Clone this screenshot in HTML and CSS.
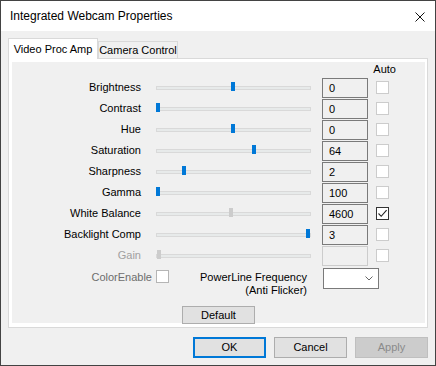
FILE: index.html
```html
<!DOCTYPE html>
<html lang="en">
<head>
    <meta charset="UTF-8">
    <title>Integrated Webcam Properties</title>
    <link rel="stylesheet" href="styles.css">
</head>
<body>
<div class="window">
    <div class="titlebar">
        <span class="title">Integrated Webcam Properties</span>
        <svg class="close" width="10" height="10" viewBox="0 0 10 10">
            <path d="M0.5 0.5 L9.5 9.5 M9.5 0.5 L0.5 9.5" stroke="#111" stroke-width="1" fill="none"/>
        </svg>
    </div>

    <div class="content">
        <div class="tabs">
            <div class="tab active">Video Proc Amp</div>
            <div class="tab">Camera Control</div>
        </div>

        <div class="page">
            <div class="page-inner">
                <div class="auto-head">Auto</div>

                <div class="props">
                    <div class="label">Brightness</div>
                    <div class="slider"><div class="track"></div><div class="thumb" style="left:75px"></div></div>
                    <div class="edit">0</div>
                    <div class="check"></div>

                    <div class="label">Contrast</div>
                    <div class="slider"><div class="track"></div><div class="thumb" style="left:0px"></div></div>
                    <div class="edit">0</div>
                    <div class="check"></div>

                    <div class="label">Hue</div>
                    <div class="slider"><div class="track"></div><div class="thumb" style="left:75px"></div></div>
                    <div class="edit">0</div>
                    <div class="check"></div>

                    <div class="label">Saturation</div>
                    <div class="slider"><div class="track"></div><div class="thumb" style="left:96px"></div></div>
                    <div class="edit">64</div>
                    <div class="check"></div>

                    <div class="label">Sharpness</div>
                    <div class="slider"><div class="track"></div><div class="thumb" style="left:26px"></div></div>
                    <div class="edit">2</div>
                    <div class="check"></div>

                    <div class="label">Gamma</div>
                    <div class="slider"><div class="track"></div><div class="thumb" style="left:0px"></div></div>
                    <div class="edit">100</div>
                    <div class="check"></div>

                    <div class="label">White Balance</div>
                    <div class="slider"><div class="track"></div><div class="thumb off" style="left:73px"></div></div>
                    <div class="edit">4600</div>
                    <div class="check checked">
                        <svg width="11" height="11" viewBox="0 0 11 11">
                            <path d="M1.5 5.5 L4.2 8.3 L9.6 2.2" stroke="#222" stroke-width="1.1" fill="none"/>
                        </svg>
                    </div>

                    <div class="label">Backlight Comp</div>
                    <div class="slider"><div class="track"></div><div class="thumb" style="left:150px"></div></div>
                    <div class="edit">3</div>
                    <div class="check"></div>

                    <div class="label disabled">Gain</div>
                    <div class="slider"><div class="track"></div><div class="thumb off" style="left:1px"></div></div>
                    <div class="edit off"></div>
                    <div class="check"></div>
                </div>

                <div class="extra">
                    <div class="label color-label">ColorEnable</div>
                    <div class="extra-mid">
                        <div class="check color-check"></div>
                        <div class="powerline">PowerLine Frequency<br>(Anti Flicker)</div>
                    </div>
                    <div class="combo">
                        <svg width="8" height="5" viewBox="0 0 8 5">
                            <path d="M0.5 0.5 L4 4 L7.5 0.5" stroke="#666" stroke-width="1" fill="none"/>
                        </svg>
                    </div>
                </div>

                <div class="default-row">
                    <div class="btn">Default</div>
                </div>
            </div>
        </div>

        <div class="buttons">
            <div class="btn btn-main">OK</div>
            <div class="btn btn-wide">Cancel</div>
            <div class="btn btn-wide off">Apply</div>
        </div>
    </div>
</div>
</body>
</html>
```

FILE: styles.css
```css
body {
    margin: 0;
    font-family: "Liberation Sans", Arial, sans-serif;
    font-size: 11px;
    color: #000;
    background-color: #f0f0f0;
}
.window {
    width: 436px;
    height: 366px;
    box-sizing: border-box;
    border: 1px solid #434343;
    background-color: #f0f0f0;
    display: flex;
    flex-direction: column;
}
.titlebar {
    height: 30px;
    background-color: #fff;
    display: flex;
    align-items: center;
    justify-content: space-between;
    padding: 0 10px 0 9px;
}
.title {
    font-size: 12px;
}
.close {
    display: block;
    margin-top: 1px;
}
.content {
    flex-grow: 1;
    padding: 7px 7px 0 7px;
}
.tabs {
    display: flex;
    align-items: flex-end;
    height: 20px;
}
.tab {
    box-sizing: border-box;
    height: 17px;
    width: 80px;
    border: 1px solid #d9d9d9;
    border-bottom: none;
    background-color: #f0f0f0;
    text-align: center;
    line-height: 16px;
}
.tab.active {
    width: 90px;
    height: 21px;
    margin-bottom: -1px;
    background-color: #fff;
    line-height: 20px;
    position: relative;
    z-index: 1;
}
.page {
    box-sizing: border-box;
    height: 270px;
    border: 1px solid #d9d9d9;
    background-color: #fff;
    padding: 3px 2px 4px 3px;
}
.page-inner {
    height: 100%;
    background-color: #f0f0f0;
}
.auto-head {
    height: 15px;
    line-height: 15px;
    text-align: right;
    padding-right: 29px;
}
.props {
    display: grid;
    grid-template-columns: 144px 166px 54px 13px;
    grid-auto-rows: 21px;
}
.label {
    text-align: right;
    padding-right: 15px;
    line-height: 20px;
    white-space: nowrap;
}
.label.disabled {
    color: #a0a0a0;
}
.slider {
    position: relative;
    display: flex;
    align-items: center;
}
.track {
    box-sizing: border-box;
    width: 155px;
    height: 4px;
    background-color: #e7eaea;
    border: 1px solid #d9d9d9;
}
.thumb {
    position: absolute;
    top: 5px;
    width: 4px;
    height: 9px;
    background-color: #0078d7;
}
.thumb.off {
    background-color: #cccccc;
}
.edit {
    box-sizing: border-box;
    width: 46px;
    height: 20px;
    margin-top: 1px;
    border: 1px solid #7a7a7a;
    padding-left: 6px;
    line-height: 18px;
}
.edit.off {
    border-color: #cccccc;
}
.check {
    box-sizing: border-box;
    width: 13px;
    height: 13px;
    align-self: center;
    border: 1px solid #cccccc;
    background-color: #fff;
}
.check.checked {
    border-color: #333;
}
.check svg {
    display: block;
}
.extra {
    display: grid;
    grid-template-columns: 144px 166px 67px;
    margin-top: 2px;
}
.color-label {
    color: #6d6d6d;
    padding-right: 4px;
    line-height: 19px;
}
.extra-mid {
    display: flex;
    justify-content: space-between;
    align-items: flex-start;
}
.check.color-check {
    align-self: flex-start;
    margin-top: 2px;
    border-color: #b5b5b5;
}
.powerline {
    text-align: right;
    padding-right: 15px;
    line-height: 13px;
    margin-top: 3px;
}
.combo {
    box-sizing: border-box;
    width: 56px;
    height: 21px;
    margin-left: 1px;
    border: 1px solid #7a7a7a;
    background-color: #fff;
    display: flex;
    justify-content: flex-end;
    align-items: center;
    padding-right: 5px;
}
.combo svg {
    display: block;
}
.default-row {
    display: flex;
    justify-content: center;
    margin-top: 9px;
}
.btn {
    box-sizing: border-box;
    width: 73px;
    height: 18px;
    border: 1px solid #adadad;
    background-color: #e1e1e1;
    text-align: center;
    line-height: 16px;
}
.buttons {
    display: flex;
    justify-content: flex-end;
    gap: 8px;
    margin-top: 9px;
}
.buttons .btn {
    height: 21px;
    line-height: 19px;
}
.btn.btn-main {
    border: 2px solid #0078d7;
    line-height: 17px;
}
.btn.off {
    background-color: #cccccc;
    border-color: #bfbfbf;
    color: #8a8a8a;
}
```
